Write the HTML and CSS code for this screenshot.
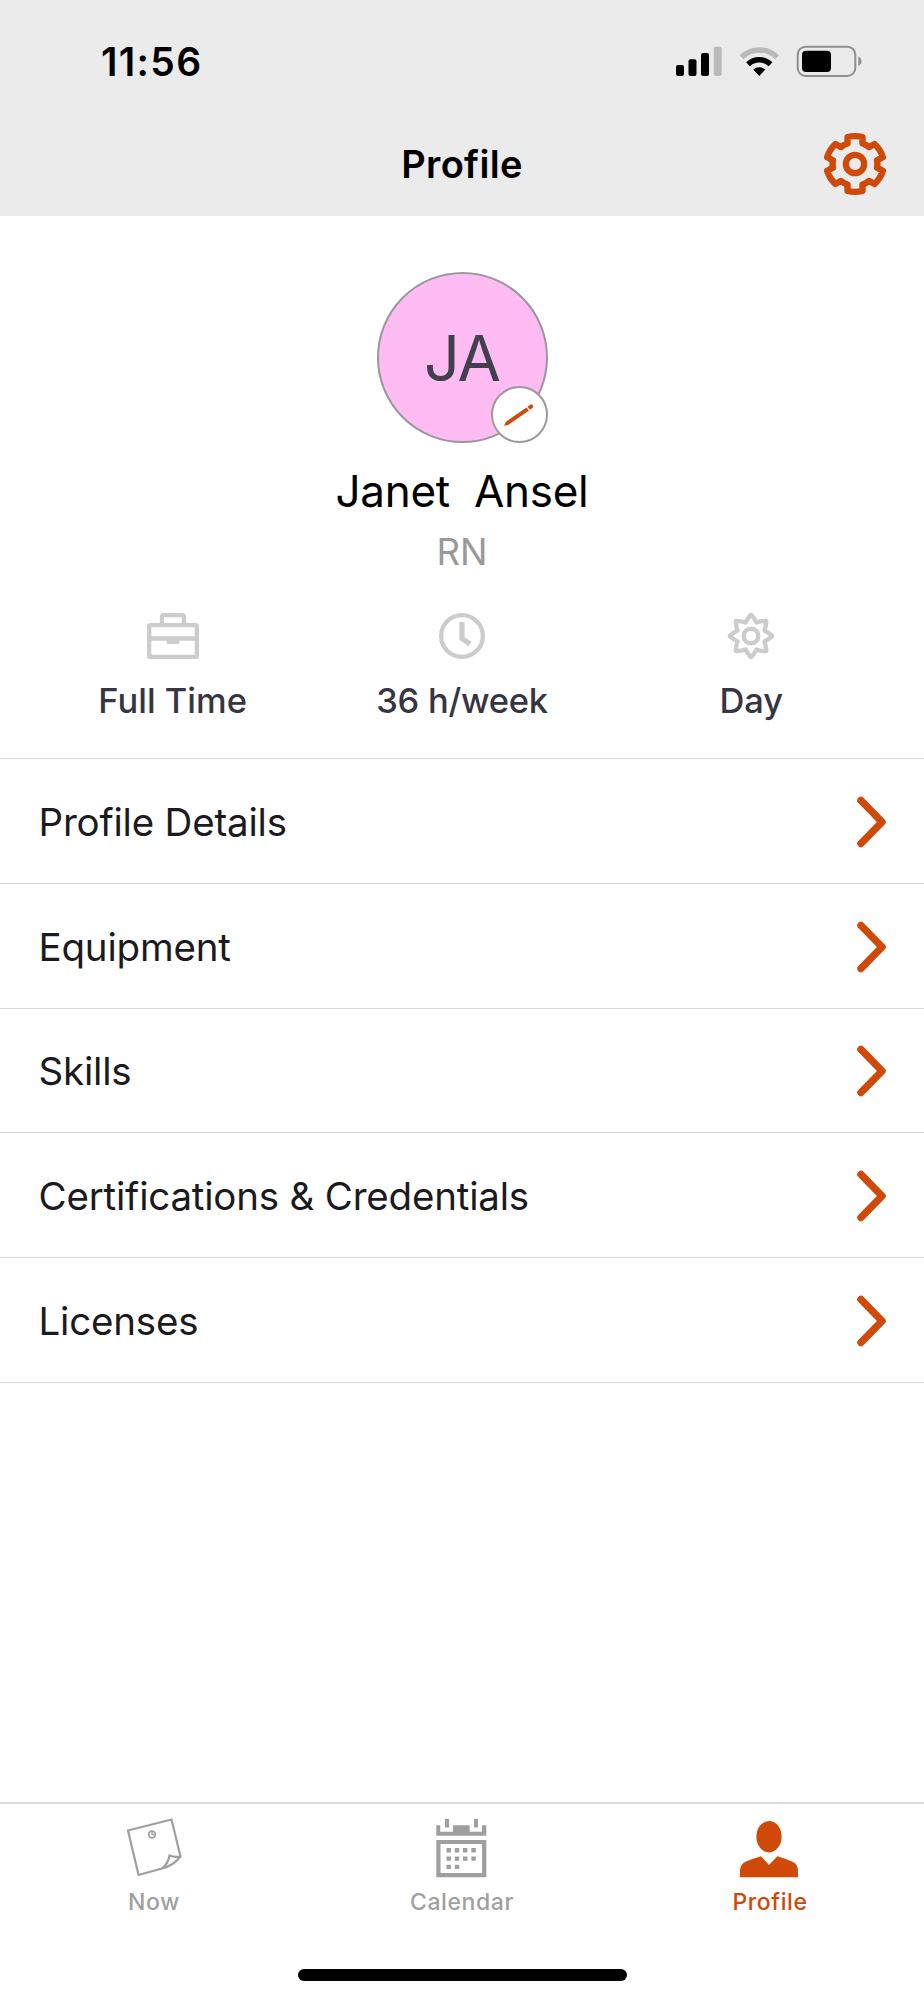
FILE: index.html
```html
<!DOCTYPE html>
<html lang="en">
<head>
<meta charset="utf-8">
<title>Profile</title>
<link rel="stylesheet" href="styles.css">
</head>
<body>
<div class="app">
  <header class="header">
    <div class="status">
      <span class="time">11:56</span>
      <svg class="signals" width="188" height="35" viewBox="674 44 188 35">
        <rect x="676" y="65" width="8" height="11" rx="2"/>
        <rect x="688.500" y="59.300" width="8" height="16.700" rx="2"/>
        <rect x="701" y="53" width="8" height="23" rx="2"/>
        <rect x="713.700" y="46.700" width="8" height="29.300" rx="2" fill="#bababa"/>
        <path d="M741.500 57.200a25.500 25.500 0 0 1 35.600 0" fill="none" stroke="#bababa" stroke-width="5.500"/>
        <path d="M748 64.200a16.500 16.500 0 0 1 22.600 0" fill="none" stroke="#000" stroke-width="5.500"/>
        <path d="M753.300 69.600a8.800 8.800 0 0 1 12 0L759.300 76z"/>
        <rect x="797.700" y="46.700" width="57.600" height="29.300" rx="8" fill="none" stroke="#8f8f8f" stroke-width="2"/>
        <rect x="802" y="50.700" width="29" height="21.300" rx="4"/>
        <path d="M858.300 56.500c4.200 2 4.200 7.500 0 9.500z" fill="#8f8f8f"/>
      </svg>
    </div>
    <div class="nav">
      <h1 class="title">Profile</h1>
      <svg class="settings" width="64" height="64" viewBox="-32 -32 64 64" fill="none" stroke="#cf4a09">
        <path stroke-width="6.400" stroke-linejoin="round" d="M-7.500 -27Q0 -28.800 7.500 -27L7.500 -20.500Q11.500 -19.200 14 -16.900L19.600 -20Q25.400 -14.500 27.900 -6.800L22 -3.700Q22.800 0 22 3.700L27.900 6.800Q25.400 14.500 19.600 20L14 16.900Q11.500 19.200 7.500 20.500L7.500 27Q0 28.800 -7.500 27L-7.500 20.500Q-11.500 19.200 -14 16.900L-19.600 20Q-25.400 14.500 -27.900 6.800L-22 3.700Q-22.800 0 -22 -3.700L-27.900 -6.800Q-25.400 -14.500 -19.600 -20L-14 -16.900Q-11.500 -19.200 -7.500 -20.500Z"/>
        <circle r="9.200" stroke-width="6.200"/>
      </svg>
    </div>
  </header>
  <section class="summary">
    <div class="avatar">
      <span class="initials">JA</span>
      <span class="edit">
        <svg width="32" height="26" viewBox="0 0 32 26" fill="#cf4a09"><path d="M1 23.800L3 19.700 23.500 5.400 26 8.500 5.500 22.800z"/><path d="M24.500 4.700L27.500 2.400Q29.500 2 30.300 4.400L29.500 6 27 7.700z"/></svg>
      </span>
    </div>
    <h2 class="name">Janet&nbsp; Ansel</h2>
    <p class="role">RN</p>
    <div class="stats">
      <div class="stat">
        <svg width="54" height="50" viewBox="0 0 54 50" fill="none" stroke="#cccccc" stroke-width="4.300"><rect x="3.200" y="14.200" width="47.700" height="31.700" rx="1.500"/><path d="M16 14V6.200q0-2 2-2H36q2 0 2 2V14M3 27.500H51"/><path d="M20.700 27H33.500V31.500q0 1.500-1.500 1.500H22.200q-1.500 0-1.500-1.500z" fill="#cccccc" stroke="none"/></svg>
        <span class="stat-label fulltime">Full Time</span>
      </div>
      <div class="stat">
        <svg width="50" height="50" viewBox="0 0 50 50" fill="none" stroke="#cccccc"><circle cx="25" cy="25" r="20.900" stroke-width="4.300"/><path d="M25 11V27.500L33 32.800" stroke-width="5.200"/></svg>
        <span class="stat-label hours">36 h/week</span>
      </div>
      <div class="stat">
        <svg width="50" height="50" viewBox="-25 -25 50 50" fill="none" stroke="#cccccc" stroke-width="4.300" stroke-linejoin="round"><path d="M-0.800 -20.700Q0 -21.700 0.800 -20.700Q3.200 -17.500 5.400 -13.500Q9.500 -15 14.300 -15.200Q15.400 -15.400 15.200 -14.300Q15 -9.500 13.500 -5.400Q17.500 -3.200 20.700 -0.800Q21.700 0 20.700 0.800Q17.500 3.200 13.500 5.400Q15 9.500 15.200 14.300Q15.400 15.400 14.300 15.200Q9.500 15 5.400 13.500Q3.200 17.500 0.800 20.700Q0 21.700 -0.800 20.700Q-3.200 17.500 -5.400 13.500Q-9.500 15 -14.300 15.200Q-15.400 15.400 -15.200 14.300Q-15 9.500 -13.500 5.400Q-17.500 3.200 -20.700 0.800Q-21.700 0 -20.700 -0.800Q-17.500 -3.200 -13.500 -5.400Q-15 -9.500 -15.200 -14.300Q-15.400 -15.400 -14.300 -15.200Q-9.500 -15 -5.400 -13.500Q-3.200 -17.500 -0.800 -20.700Z"/><circle r="7.300"/></svg>
        <span class="stat-label day">Day</span>
      </div>
    </div>
  </section>
  <nav class="menu">
    <a class="row"><span>Profile Details</span><svg class="chev" width="32" height="54" viewBox="0 0 32 54"><path d="M5 5.500L26 27 5 48.500"/></svg></a>
    <a class="row"><span>Equipment</span><svg class="chev" width="32" height="54" viewBox="0 0 32 54"><path d="M5 5.500L26 27 5 48.500"/></svg></a>
    <a class="row"><span>Skills</span><svg class="chev" width="32" height="54" viewBox="0 0 32 54"><path d="M5 5.500L26 27 5 48.500"/></svg></a>
    <a class="row"><span>Certifications &amp; Credentials</span><svg class="chev" width="32" height="54" viewBox="0 0 32 54"><path d="M5 5.500L26 27 5 48.500"/></svg></a>
    <a class="row"><span>Licenses</span><svg class="chev" width="32" height="54" viewBox="0 0 32 54"><path d="M5 5.500L26 27 5 48.500"/></svg></a>
  </nav>
  <footer class="tabs">
    <a class="tab">
      <svg width="60" height="64" viewBox="124 1816 60 64" fill="none" stroke="#9f9f9f" stroke-width="2.200"><path d="M162 1868.500L138.500 1875 128 1830.500 171.500 1819.500 180.500 1856.500Q173 1866 162 1868.500Q168 1864 169.500 1855.500Q174 1857.500 180.500 1856.500"/><circle cx="152" cy="1834.500" r="3.300" stroke-width="1.700"/><path d="M152 1832V1834.500H154" stroke-width="1.300"/></svg>
      <span class="tab-label">Now</span>
    </a>
    <a class="tab">
      <svg width="60" height="64" viewBox="432 1816 60 64" fill="#9f9f9f"><path d="M445 1819h4v8.500h-4zM474 1819h4v8.500h-4zM436.300 1825.300h4v6.400h12.700v-6.400h16.700v6.400h12.300v-6.400h4.300v10.400h-50z"/><path fill-rule="evenodd" d="M436.300 1840h50v37.300h-50zM440.500 1844v29h41.600v-29z"/><path d="M446.500 1848h4.400v4.400h-4.400zM454.800 1848h4.400v4.400h-4.400zM463 1848h4.400v4.400h-4.400zM471.400 1848h4.400v4.400h-4.400zM446.500 1856.400h4.400v4.400h-4.400zM454.800 1856.400h4.400v4.400h-4.400zM463 1856.400h4.400v4.400h-4.400zM471.400 1856.400h4.400v4.400h-4.400zM446.500 1864.700h4.400v4.400h-4.400zM454.800 1864.700h4.400v4.400h-4.400z"/></svg>
      <span class="tab-label">Calendar</span>
    </a>
    <a class="tab active">
      <svg width="60" height="64" viewBox="740 1816 60 64" fill="#cf4a09"><ellipse cx="769" cy="1836.700" rx="12.600" ry="15.700"/><path d="M740 1877.300V1871Q740 1864 746 1861.500Q753 1858.500 761 1856.200L769 1865 777.300 1856.200Q785 1858.500 792 1861.500Q798 1864 798 1871V1877.300z"/></svg>
      <span class="tab-label">Profile</span>
    </a>
  </footer>
  <div class="home"><span class="pill"></span></div>
</div>
</body>
</html>
```
FILE: styles.css
```css
* { box-sizing: border-box; }
body { margin: 0; background: #fff; font-family: Inter, "Liberation Sans", sans-serif; color: #000; }
h1, h2, p { margin: 0; }
svg { display: block; }
.app { width: 924px; height: 2000px; display: flex; flex-direction: column; background: #fff; }
.header { height: 216px; background: #ebebeb; }
.status { height: 123px; display: flex; justify-content: space-between; align-items: center; padding: 0 62px 0 101px; }
.time { font-size: 39px; font-weight: 600; line-height: 46px; letter-spacing: 1.300px; }
.nav { height: 82px; display: grid; grid-template-columns: 1fr auto 1fr; align-items: center; padding: 0 37px; }
.title { grid-column: 2; font-size: 38px; font-weight: 600; line-height: 46px; letter-spacing: 0.300px; }
.settings { justify-self: end; }
.summary { height: 542px; display: flex; flex-direction: column; align-items: center; padding-top: 56px; }
.avatar { position: relative; width: 171px; height: 171px; border: 2px solid #9b959e; border-radius: 50%; background: #ffbcf2; display: flex; align-items: center; justify-content: center; }
.initials { font-size: 63px; line-height: 76px; letter-spacing: -1px; color: #41404d; }
.edit { position: absolute; right: -2px; bottom: -2px; width: 57px; height: 57px; border: 2px solid #9c9a9d; border-radius: 50%; background: #fff; display: flex; align-items: center; justify-content: center; }
.name { margin-top: 20px; font-size: 44px; font-weight: 400; line-height: 56px; letter-spacing: -0.300px; }
.role { margin-top: 11px; font-size: 36.500px; line-height: 44px; color: #999; }
.stats { width: 100%; display: grid; grid-template-columns: repeat(3, 1fr); padding: 0 28px; margin-top: 37px; }
.stat { display: flex; flex-direction: column; align-items: center; gap: 18px; }
.stat-label { font-size: 34.500px; font-weight: 500; line-height: 44px; color: #363541; }
.hours { letter-spacing: -0.250px; }
.menu { border-top: 1px solid #d4d4d4; }
.row { height: 124.800px; display: flex; align-items: center; justify-content: space-between; padding: 2px 36px 0 38.500px; border-bottom: 1px solid #d4d4d4; font-size: 38.500px; letter-spacing: -0.200px; color: #1b1a20; }
.chev path { fill: none; stroke: #cf4a09; stroke-width: 7.500; stroke-linecap: round; stroke-linejoin: round; }
.tabs { margin-top: auto; border-top: 2px solid #dcdcdc; height: 120px; display: grid; grid-template-columns: repeat(3, 1fr); padding-top: 12px; }
.tab { display: flex; flex-direction: column; align-items: center; gap: 8px; color: #9f9f9f; }
.tab-label { font-size: 23px; font-weight: 500; line-height: 28px; letter-spacing: 0.600px; }
.active { color: #cf4a09; }
.home { height: 78px; padding-top: 47px; display: flex; justify-content: center; }
.pill { width: 329px; height: 12px; border-radius: 6px; background: #000; }
```
